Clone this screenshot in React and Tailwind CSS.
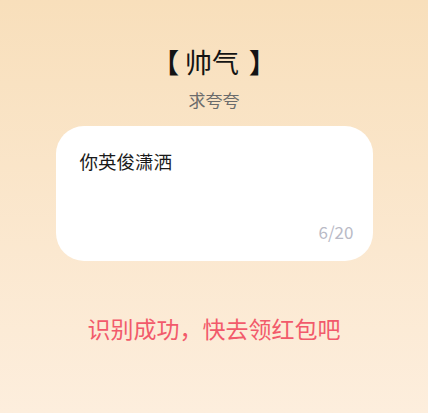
import React from 'react';

const font = { fontFamily: '"Noto Sans CJK SC", "Noto Sans", sans-serif' };

export default function App() {
  return (
    <div
      className="w-[428px] h-[413px] flex flex-col items-center bg-gradient-to-b from-[#f8dfbb] to-[#fdeedd]"
      style={font}
    >
      {/* Title */}
      <div className="mt-[43px] flex items-center text-[27px] leading-[38px] text-[#141414]">
        <span className="font-bold">【</span>
        <span className="ml-[6px]">帅气</span>
        <span className="ml-[10px] font-bold">】</span>
      </div>
      <div className="mt-[7px] text-[17px] leading-[24px] text-[#6b6b6b]">求夸夸</div>

      {/* Card */}
      <div className="mt-[14px] w-[317px] h-[135px] bg-white rounded-[28px] flex flex-col pl-[24px] pr-[19px] pt-[21px] pb-[18px]">
        <div className="text-[18.5px] leading-[28px] text-[#1a1a1a]">你英俊潇洒</div>
        <div className="mt-auto self-end text-[17px] leading-[22px] text-[#b9bac6]">6/20</div>
      </div>

      {/* Result */}
      <div className="mt-[51px] text-[23px] leading-[32px] text-[#f25a6b]">
        识别成功，快去领红包吧
      </div>
    </div>
  );
}
